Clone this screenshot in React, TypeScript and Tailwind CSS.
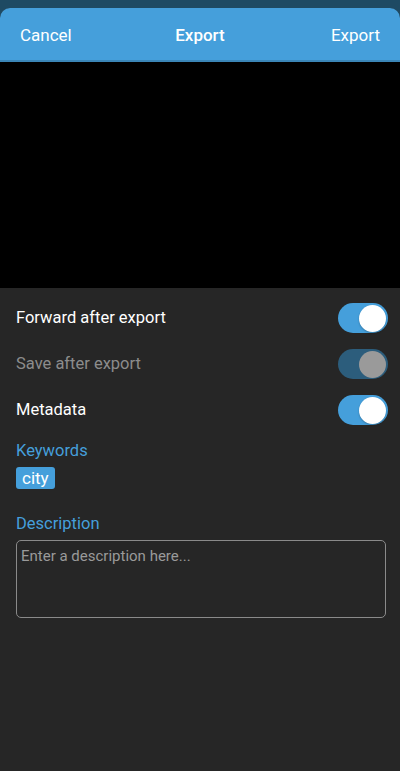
import React from 'react';

const Toggle: React.FC<{ disabled?: boolean }> = ({ disabled }) => (
  <div
    className={`w-[50px] h-[30px] rounded-full flex items-center justify-end pr-[2px] ${
      disabled ? 'bg-[#2c5d7c]' : 'bg-[#459fdb]'
    }`}
  >
    <div
      className={`w-[27px] h-[27px] rounded-full ${
        disabled ? 'bg-[#9a9a9a]' : 'bg-white shadow-[0_1px_2px_rgba(0,0,0,0.25)]'
      }`}
    />
  </div>
);

const rows = [
  { label: 'Forward after export', disabled: false },
  { label: 'Save after export', disabled: true },
  { label: 'Metadata', disabled: false },
];

export default function App() {
  return (
    <div className="w-[400px] h-[771px] bg-[#1e4a63] flex flex-col pt-2 font-['Roboto',sans-serif] overflow-hidden">
      <div className="flex-1 flex flex-col rounded-t-[10px] overflow-hidden bg-[#262626]">
        <header className="h-[54px] bg-[#459fdb] border-b-2 border-[#3b86b8] grid grid-cols-3 items-center px-5 pt-[3px] text-white text-[17px]">
          <span>Cancel</span>
          <span className="font-medium text-center">Export</span>
          <span className="text-right">Export</span>
        </header>

        <div className="h-[226px] bg-black" />

        <div className="flex flex-col px-4 pt-[7px]">
          {rows.map((r) => (
            <div key={r.label} className="h-[46px] flex items-center justify-between -mr-[4px]">
              <span className={`text-[16.5px] ${r.disabled ? 'text-[#8c8c8c]' : 'text-white'}`}>{r.label}</span>
              <Toggle disabled={r.disabled} />
            </div>
          ))}

          <div className="mt-[6px] text-[16.5px] text-[#459fdb] leading-[24px]">Keywords</div>
          <div className="mt-[4px] flex">
            <span className="bg-[#459fdb] text-white text-[17px] leading-[22px] px-[6px] rounded-[3px]">city</span>
          </div>

          <div className="mt-[23px] text-[16.5px] text-[#459fdb] leading-[24px]">Description</div>
          <div className="mt-[4px] w-[370px] h-[78px] border-[1.5px] border-[#8a8a8a] rounded-[5px] px-[4px] pt-[3px]">
            <span className="text-[15px] text-[#9a9a9a]">Enter a description here...</span>
          </div>
        </div>
      </div>
    </div>
  );
}
